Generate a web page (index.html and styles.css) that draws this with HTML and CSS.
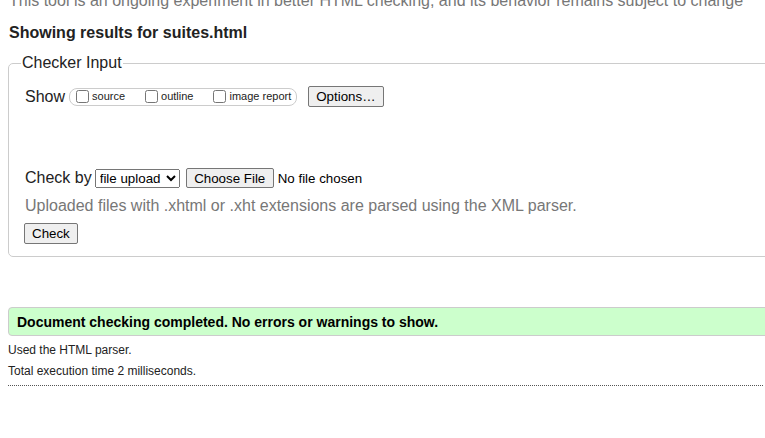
FILE: index.html
```html
<!DOCTYPE html>
<html lang="en">
<head>
<meta charset="utf-8">
<title>Showing results for suites.html - Nu Html Checker</title>
<link rel="stylesheet" href="styles.css">
</head>
<body>
<div class="page">
<p class="intro">This tool is an ongoing experiment in better HTML checking, and its behavior remains subject to change</p>
<h2 class="title">Showing results for suites.html</h2>
<fieldset class="checker">
  <legend class="legend">Checker Input</legend>
  <div class="row row-show">
    <span class="label">Show</span>
    <fieldset class="pill">
      <label class="opt"><input type="checkbox" class="cb">source</label>
      <label class="opt"><input type="checkbox" class="cb">outline</label>
      <label class="opt"><input type="checkbox" class="cb">image report</label>
    </fieldset>
    <button type="button" class="btn btn-options">Options…</button>
  </div>
  <div class="row row-check">
    <span class="label">Check by</span>
    <select class="sel"><option>file upload</option></select>
    <button type="button" class="btn">Choose File</button>
    <span class="nofile">No file chosen</span>
  </div>
  <p class="hint">Uploaded files with .xhtml or .xht extensions are parsed using the XML parser.</p>
  <div class="row row-submit">
    <button type="button" class="btn">Check</button>
  </div>
</fieldset>
<div class="success">Document checking completed. No errors or warnings to show.</div>
<p class="stats">Used the HTML parser.</p>
<p class="stats">Total execution time 2 milliseconds.</p>
<div class="rule"></div>
</div>
</body>
</html>
```

FILE: styles.css
```css
body {
  margin: 0;
  font-family: "Liberation Sans", Arial, sans-serif;
  font-size: 16px;
  color: #222;
  background: #fff;
}
.page {
  padding: 1px 0 0 8px;
  margin-top: -1px;
  overflow: hidden;
}
.intro {
  margin: -8px 0 0 1px;
  line-height: 18px;
  color: #777;
  white-space: nowrap;
}
.title {
  margin: 14px 0 0 1px;
  font-size: 16px;
  line-height: 18px;
  font-weight: bold;
}
.checker {
  margin: 12px -30px 0 0;
  padding: 0 15px 12px 15px;
  border: 1px solid #ccc;
  border-radius: 5px;
}
.legend {
  margin-left: -3px;
  padding: 0 1px;
  line-height: 18px;
}
.row {
  display: flex;
  align-items: center;
}
.row-show {
  margin-top: 14px;
  height: 21px;
}
.label {
  line-height: 18px;
  margin-left: 1px;
}
.pill {
  display: flex;
  align-items: center;
  gap: 20px;
  margin: 0 0 0 4px;
  padding: 0 5px 0 6px;
  height: 16px;
  border: 1px solid #ccc;
  border-radius: 8px;
  font-size: 11px;
  min-inline-size: 0;
}
.opt {
  display: flex;
  align-items: center;
  line-height: 13px;
}
.cb {
  margin: 0 3px 0 0;
  width: 13px;
  height: 13px;
}
.btn {
  font-family: "Liberation Sans", Arial, sans-serif;
  font-size: 13.33px;
  line-height: 15px;
  height: 21px;
  padding: 2px 7px;
  border: 1px solid #767676;
  border-radius: 2px;
  background: #efefef;
  color: #000;
}
.btn-options {
  margin-left: 11px;
}
.row-check {
  margin-top: 61px;
  height: 20px;
}
.sel {
  margin-left: 3px;
  width: 85px;
  height: 19px;
  font-family: "Liberation Sans", Arial, sans-serif;
  font-size: 13.33px;
  color: #000;
}
.row-check .btn {
  margin-left: 6px;
  width: 88px;
  height: 20px;
  padding: 1px 7px;
}
.nofile {
  margin-left: 4px;
  font-size: 13.33px;
  color: #000;
}
.hint {
  margin: 9px 0 0 1px;
  line-height: 18px;
  color: #777;
  white-space: nowrap;
}
.row-submit {
  margin-top: 8px;
}
.success {
  margin: 50px -30px 0 0;
  padding: 6px 8px 5px;
  border: 1px solid #ccc;
  border-radius: 4px;
  background: #ccffcc;
  font-size: 14px;
  line-height: 16px;
  font-weight: bold;
  color: #000;
}
.stats {
  margin: 7px 0;
  font-size: 12px;
  line-height: 14px;
}
.rule {
  margin: 1px 2px 0 0;
  border-bottom: 1px dotted #555;
}
```
